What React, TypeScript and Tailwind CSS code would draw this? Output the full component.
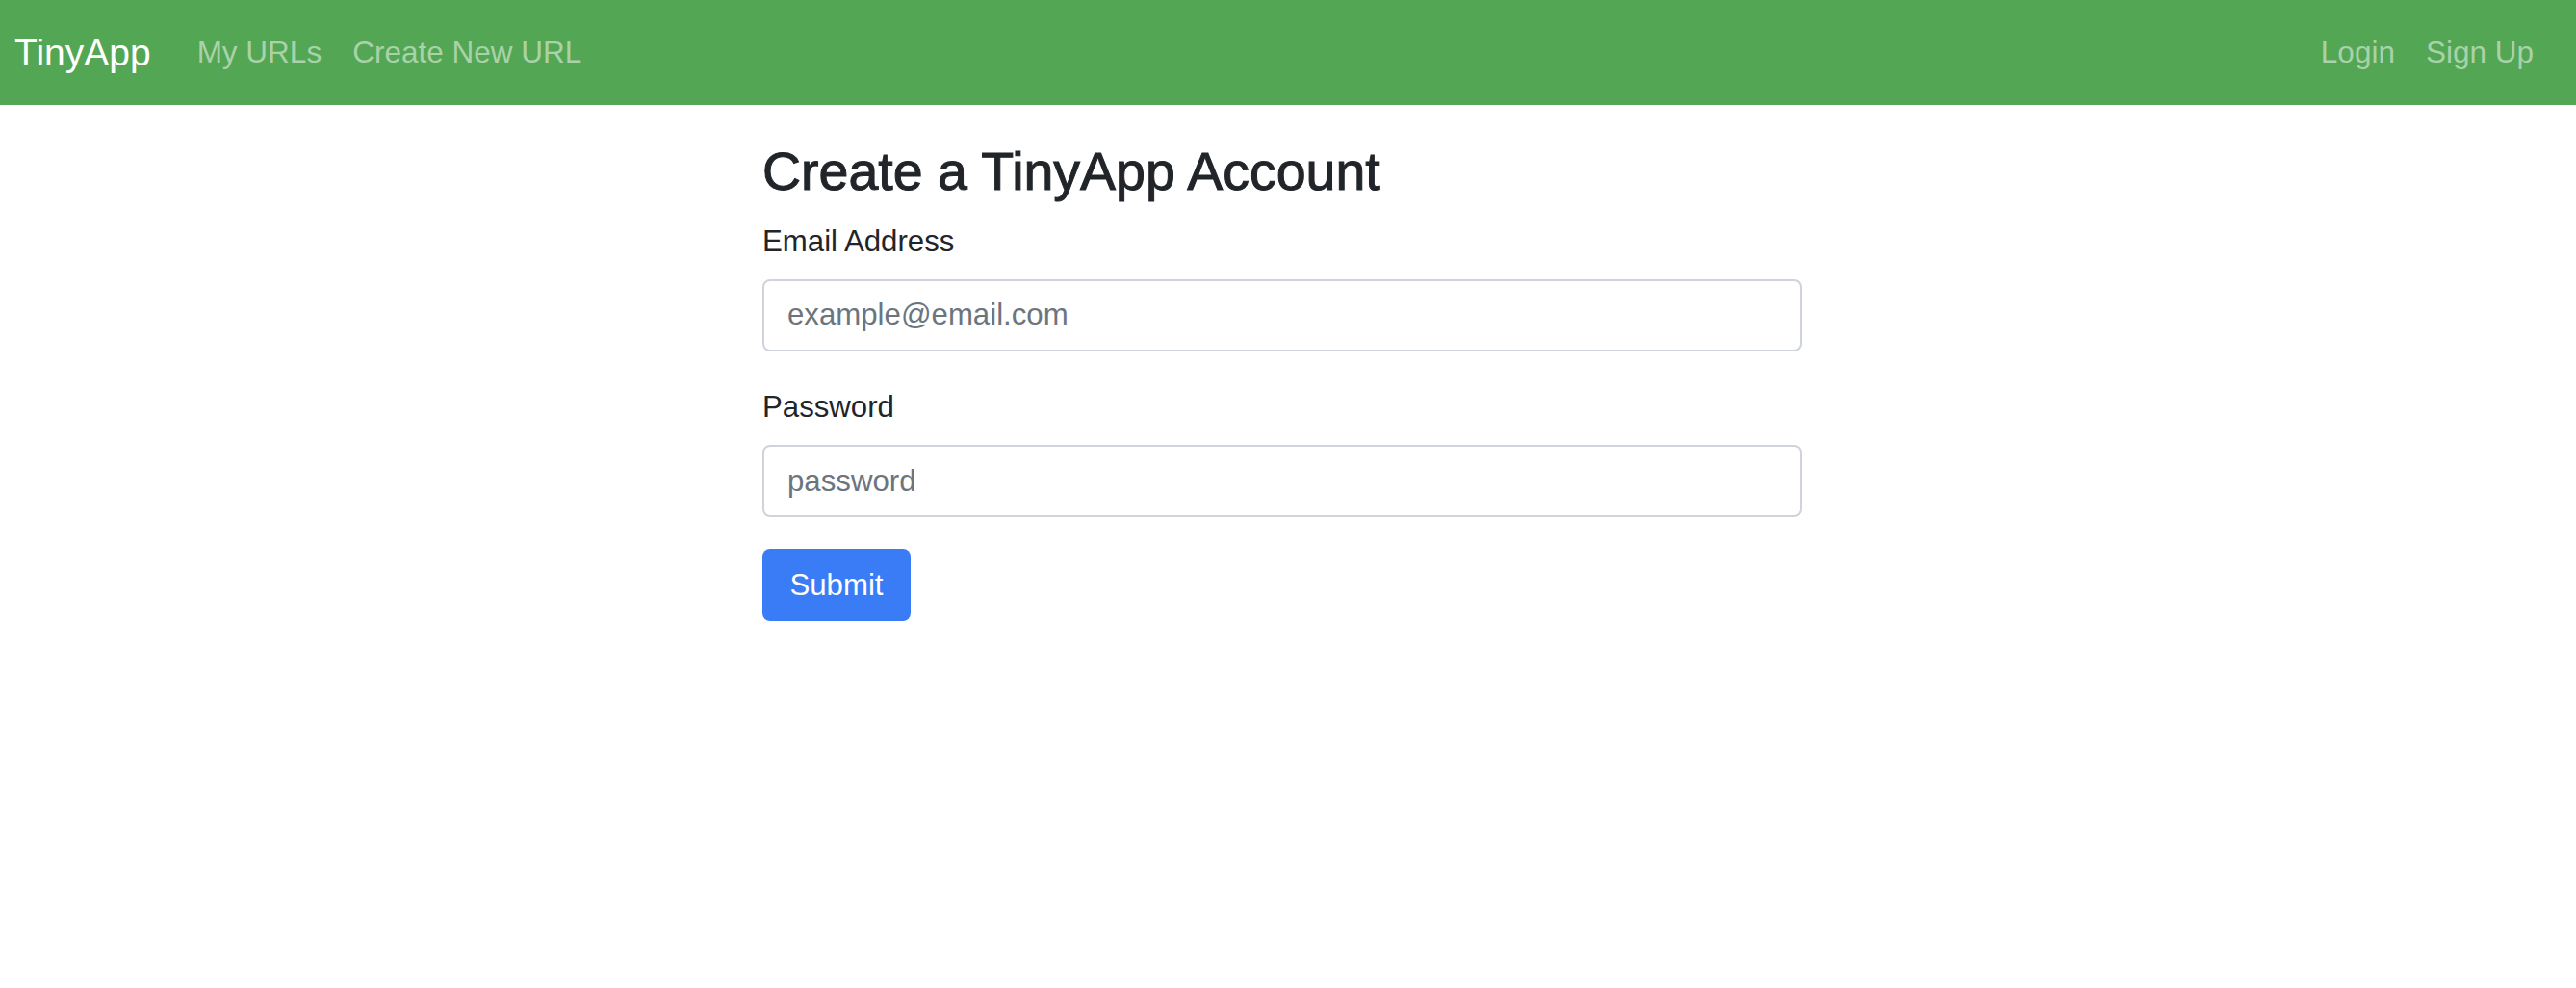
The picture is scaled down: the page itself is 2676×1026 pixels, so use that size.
const navLinks = ["My URLs", "Create New URL"]
const authLinks = ["Login", "Sign Up"]

function Navbar() {
    return (
        <nav className="flex h-[109px] items-center justify-between bg-[#53a653] pl-[15px] pr-[28px]">
            <div className="flex items-center">
                <a href="#" className="mr-[32px] text-[39px] leading-none text-white">
                    TinyApp
                </a>
                {navLinks.map((link) => (
                    <a key={link} href="#" className="px-[16px] text-[31.5px] leading-none text-[#a9d2a9]">
                        {link}
                    </a>
                ))}
            </div>
            <div className="flex items-center">
                {authLinks.map((link) => (
                    <a key={link} href="#" className="px-[16px] text-[31.5px] leading-none text-[#a9d2a9]">
                        {link}
                    </a>
                ))}
            </div>
        </nav>
    )
}

type FieldProps = {
    label: string
    type: string
    placeholder: string
}

function Field({ label, type, placeholder }: FieldProps) {
    return (
        <div className="mb-[35px] flex flex-col">
            <label className="mb-[15.6px] text-[31.2px] leading-[1.5] text-[#212529]">{label}</label>
            <input
                type={type}
                placeholder={placeholder}
                className="h-[75px] w-full rounded-[8px] border-2 border-[#ced4da] bg-white px-[24px] text-[31.2px] text-[#495057] outline-none placeholder:text-[#6c757d]"
            />
        </div>
    )
}

export default function App() {
    return (
        <div className="min-h-[1026px] bg-white font-['Liberation_Sans',Arial,sans-serif]">
            <Navbar />
            <main className="pl-[792px] pt-[36px]">
                <form className="w-[1080px]" onSubmit={(e) => e.preventDefault()}>
                    <h3 className="mb-[16px] text-[55.5px] leading-[1.2] text-[#212529] [-webkit-text-stroke:1px_#212529]">
                        Create a TinyApp Account
                    </h3>
                    <Field label="Email Address" type="email" placeholder="example@email.com" />
                    <Field label="Password" type="password" placeholder="password" />
                    <button
                        type="submit"
                        className="-mt-[2px] h-[75px] w-[154px] rounded-[8px] bg-[#3a7cf5] text-[31.2px] leading-none text-white"
                    >
                        Submit
                    </button>
                </form>
            </main>
        </div>
    )
}
